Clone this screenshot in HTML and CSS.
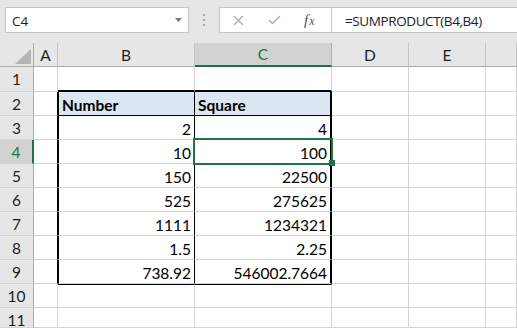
FILE: index.html
```html
<!DOCTYPE html>
<html>
<head lang="en">
    <meta charset="utf-8">
    <link rel="stylesheet" href="styles.css">
</head>
<body>

<div class="formulaBar">
    <div class="nameBox">
        <span>C4</span>
        <svg class="caret" width="7" height="4" viewBox="0 0 7 4"><path d="M0 0H7L3.5 4Z" fill="#7a7a7a"/></svg>
    </div>
    <div class="grip"><i></i><i></i><i></i></div>
    <div class="fxButtons">
        <svg width="11" height="11" viewBox="0 0 11 11"><path d="M1 1L10 10M10 1L1 10" stroke="#ababab" stroke-width="1.3" fill="none"/></svg>
        <svg class="enter" width="13" height="10" viewBox="0 0 13 10"><path d="M1 5L4.5 8.5L12 1" stroke="#ababab" stroke-width="1.4" fill="none"/></svg>
        <span class="fx"><i>f</i><i class="fxX">x</i></span>
    </div>
    <div class="formulaInput">=SUMPRODUCT(B4,B4)</div>
</div>

<div class="sheet">
    <!-- column headers -->
    <div class="corner"><svg width="16" height="15" viewBox="0 0 16 15"><path d="M16 0V15H0Z" fill="#b5b5b5"/></svg></div>
    <div class="colHead">A</div>
    <div class="colHead">B</div>
    <div class="colHead selHead">C</div>
    <div class="colHead">D</div>
    <div class="colHead">E</div>
    <div class="colHead"></div>

    <!-- row 1 -->
    <div class="rowHead">1</div>
    <div class="cell"></div>
    <div class="cell tblTop"></div>
    <div class="cell tblTop"></div>
    <div class="cell"></div>
    <div class="cell"></div>
    <div class="cell"></div>

    <!-- row 2 -->
    <div class="rowHead">2</div>
    <div class="cell tblA"></div>
    <div class="cell tblB tblHead">Number</div>
    <div class="cell tblC tblHead">Square</div>
    <div class="cell"></div>
    <div class="cell"></div>
    <div class="cell"></div>

    <!-- row 3 -->
    <div class="rowHead">3</div>
    <div class="cell tblA"></div>
    <div class="cell tblB">2</div>
    <div class="cell tblC">4</div>
    <div class="cell"></div>
    <div class="cell"></div>
    <div class="cell"></div>

    <!-- row 4 -->
    <div class="rowHead selRow">4</div>
    <div class="cell tblA"></div>
    <div class="cell tblB">10</div>
    <div class="cell tblC active">100<div class="selection"><div class="handle"></div></div></div>
    <div class="cell"></div>
    <div class="cell"></div>
    <div class="cell"></div>

    <!-- row 5 -->
    <div class="rowHead">5</div>
    <div class="cell tblA"></div>
    <div class="cell tblB">150</div>
    <div class="cell tblC">22500</div>
    <div class="cell"></div>
    <div class="cell"></div>
    <div class="cell"></div>

    <!-- row 6 -->
    <div class="rowHead">6</div>
    <div class="cell tblA"></div>
    <div class="cell tblB">525</div>
    <div class="cell tblC">275625</div>
    <div class="cell"></div>
    <div class="cell"></div>
    <div class="cell"></div>

    <!-- row 7 -->
    <div class="rowHead">7</div>
    <div class="cell tblA"></div>
    <div class="cell tblB">1111</div>
    <div class="cell tblC">1234321</div>
    <div class="cell"></div>
    <div class="cell"></div>
    <div class="cell"></div>

    <!-- row 8 -->
    <div class="rowHead">8</div>
    <div class="cell tblA"></div>
    <div class="cell tblB">1.5</div>
    <div class="cell tblC">2.25</div>
    <div class="cell"></div>
    <div class="cell"></div>
    <div class="cell"></div>

    <!-- row 9 -->
    <div class="rowHead">9</div>
    <div class="cell tblA"></div>
    <div class="cell tblB">738.92</div>
    <div class="cell tblC">546002.7664</div>
    <div class="cell"></div>
    <div class="cell"></div>
    <div class="cell"></div>

    <!-- row 10 -->
    <div class="rowHead">10</div>
    <div class="cell"></div>
    <div class="cell tblUnder"></div>
    <div class="cell tblUnder"></div>
    <div class="cell"></div>
    <div class="cell"></div>
    <div class="cell"></div>

    <!-- row 11 (cut by the window) -->
    <div class="rowHead lastRow">11</div>
    <div class="cell"></div>
    <div class="cell"></div>
    <div class="cell"></div>
    <div class="cell"></div>
    <div class="cell"></div>
    <div class="cell"></div>
</div>

</body>
</html>
```

FILE: styles.css
```css
body {
	margin: 0;
	width: 517px;
	height: 328px;
	overflow: hidden;
	background: #fff;
	font-family: Lato, "Liberation Sans", sans-serif;
	color: #000;
}

/* ---------- formula bar ---------- */
.formulaBar {
	display: flex;
	align-items: flex-start;
	height: 43px;
	padding-top: 7px;
	box-sizing: border-box;
	background: #e6e6e6;
	font-family: "Open Sans", "Liberation Sans", sans-serif;
	font-size: 13.5px;
	color: #222;
}

.nameBox {
	margin-left: 5px;
	width: 184px;
	height: 26px;
	box-sizing: border-box;
	border: 1px solid #c6c6c6;
	background: #fff;
	display: flex;
	align-items: center;
	justify-content: space-between;
	padding: 1px 6px 0 6px;
	line-height: 24px;
}

.caret {
	margin-top: -2px;
}

.grip {
	width: 30px;
	height: 26px;
	display: flex;
	flex-direction: column;
	align-items: center;
	justify-content: center;
	gap: 3px;
}
.grip i {
	display: block;
	width: 2px;
	height: 2px;
	background: #a6a6a6;
}

.fxButtons {
	width: 113px;
	height: 26px;
	box-sizing: border-box;
	border: 1px solid #c6c6c6;
	background: #fff;
	display: flex;
	align-items: center;
	padding-left: 13px;
}
.fxButtons .enter {
	margin-left: 24px;
}

.fx {
	margin-left: 23px;
	font-family: "Liberation Serif", serif;
	font-size: 15px;
	color: #555;
	line-height: 24px;
}
.fxX {
	font-size: 12px;
	margin-left: 1px;
}

.formulaInput {
	flex: 1;
	margin-left: -1px;
	height: 26px;
	box-sizing: border-box;
	border: 1px solid #c6c6c6;
	border-right: none;
	background: #fff;
	padding: 1px 0 0 13px;
	line-height: 24px;
	letter-spacing: -0.4px;
	white-space: nowrap;
	overflow: hidden;
}

/* ---------- sheet grid ---------- */
.sheet {
	display: grid;
	grid-template-columns: 34px 24px 137px 137px 77px 77px 31px;
	grid-template-rows: 24px 25px repeat(9, 24px) 20px;
	font-size: 15.5px;
	line-height: 18px;
	overflow: hidden;
}

.corner {
	background: #e6e6e6;
	border-right: 1px solid #ababab;
	border-bottom: 1px solid #ababab;
	box-sizing: border-box;
	display: flex;
	align-items: flex-end;
	justify-content: flex-end;
	padding: 0 2px 2px 0;
}

.colHead {
	background: #e6e6e6;
	border-right: 1px solid #c4c4c4;
	border-bottom: 1px solid #ababab;
	box-sizing: border-box;
	display: flex;
	align-items: center;
	justify-content: center;
	color: #1e1e1e;
}
.selHead {
	background: #d2d2d2;
	border-right-color: #ababab;
	border-bottom: 2px solid #217346;
	color: #217346;
}

.rowHead {
	background: #e6e6e6;
	border-right: 1px solid #ababab;
	border-bottom: 1px solid #d4d4d4;
	box-sizing: border-box;
	display: flex;
	align-items: center;
	justify-content: center;
	color: #1e1e1e;
}
.lastRow {
	align-items: flex-start;
	padding-top: 3px;
}
.selRow {
	background: #d2d2d2;
	border-right: 2px solid #217346;
	color: #217346;
}

.cell {
	border-right: 1px solid #d4d4d4;
	border-bottom: 1px solid #d4d4d4;
	box-sizing: border-box;
	display: flex;
	align-items: flex-end;
	justify-content: flex-end;
	padding: 0 3px 1px 3px;
	white-space: nowrap;
}

/* table frame on B2:C9 */
.tblTop {
	border-bottom: 2px solid #000;
}
.tblA {
	border-right-color: #000;
}
.tblB {
	border-left: 1px solid #000;
	border-right-color: #000;
}
.tblC {
	border-right: 2px solid #000;
}
.tblHead {
	background: #dce6f1;
	border-bottom-color: #000;
	font-weight: bold;
	justify-content: flex-start;
}
.tblUnder {
	border-top: 1px solid #000;
}

/* active cell */
.active {
	position: relative;
}
.selection {
	position: absolute;
	top: -2px;
	left: -2px;
	right: -3px;
	bottom: -2px;
	border: 2px solid #217346;
	z-index: 2;
}
.handle {
	position: absolute;
	left: 134px;
	top: 20px;
	width: 6px;
	height: 6px;
	background: #217346;
}
```
